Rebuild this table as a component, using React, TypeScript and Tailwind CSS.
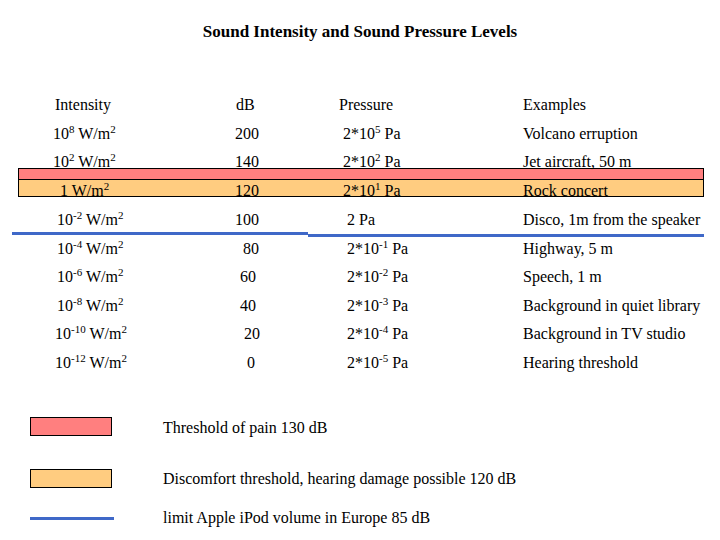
import React from "react";

const Sup = ({ children }: { children: React.ReactNode }) => (
  <span className="relative -top-[6px] text-[11px] leading-none">{children}</span>
);

type RowProps = {
  a: React.ReactNode;
  b: React.ReactNode;
  c: React.ReactNode;
  d: React.ReactNode;
  pa: string;
  pb: string;
  pc: string;
  className?: string;
};

const Row = ({ a, b, c, d, pa, pb, pc, className = "" }: RowProps) => (
  <div className={`flex h-4 leading-4 whitespace-nowrap ${className}`}>
    <div className={`w-[230px] shrink-0 ${pa}`}>{a}</div>
    <div className={`w-[105px] shrink-0 ${pb}`}>{b}</div>
    <div className={`w-[185px] shrink-0 ${pc}`}>{c}</div>
    <div className="pl-[3px]">{d}</div>
  </div>
);

export default function App() {
  return (
    <div
      className="w-[720px] h-[540px] bg-white text-black overflow-hidden relative"
      style={{ fontFamily: '"Liberation Serif", "Times New Roman", serif' }}
    >
      <div className="pt-[22px] h-[42px] text-center text-[17px] font-bold leading-5">
        Sound Intensity and Sound Pressure Levels
      </div>

      <div className="text-[16px]">
        <Row
          className="mt-[55px]"
          pa="pl-[55px]"
          pb="pl-[6px]"
          pc="pl-[4px]"
          a="Intensity"
          b="dB"
          c="Pressure"
          d="Examples"
        />
        <Row
          className="mt-[13px]"
          pa="pl-[53px]"
          pb="pl-[5px]"
          pc="pl-[8px]"
          a={<>10<Sup>8</Sup> W/m<Sup>2</Sup></>}
          b="200"
          c={<>2*10<Sup>5</Sup> Pa</>}
          d="Volcano erruption"
        />
        <Row
          className="mt-[12px]"
          pa="pl-[53px]"
          pb="pl-[5px]"
          pc="pl-[8px]"
          a={<>10<Sup>2</Sup> W/m<Sup>2</Sup></>}
          b="140"
          c={<>2*10<Sup>2</Sup> Pa</>}
          d="Jet aircraft, 50 m"
        />
        <div className="-mt-[2px] ml-[18px] w-[686px] border border-black">
          <div className="h-[11px] bg-[#ff7f7f] border-b border-black" />
          <div className="h-4 pt-[3px] bg-[#ffcc80]">
            <Row
              className="-ml-[19px]"
              pa="pl-[60px]"
              pb="pl-[5px]"
              pc="pl-[8px]"
              a={<>1 W/m<Sup>2</Sup></>}
              b="120"
              c={<>2*10<Sup>1</Sup> Pa</>}
              d="Rock concert"
            />
          </div>
        </div>
        <Row
          className="mt-[15px]"
          pa="pl-[57px]"
          pb="pl-[5px]"
          pc="pl-[12px]"
          a={<>10<Sup>-2</Sup> W/m<Sup>2</Sup></>}
          b="100"
          c="2 Pa"
          d="Disco, 1m from the speaker"
        />
        <div className="flex mt-[4px] h-[5px]">
          <div className="ml-[12px] w-[296px] h-[3px] bg-[#3f68c8]" />
          <div className="mt-[2px] w-[396px] h-[3px] bg-[#3f68c8]" />
        </div>
        <Row
          className="mt-[4px]"
          pa="pl-[57px]"
          pb="pl-[13px]"
          pc="pl-[12px]"
          a={<>10<Sup>-4</Sup> W/m<Sup>2</Sup></>}
          b="80"
          c={<>2*10<Sup>-1</Sup> Pa</>}
          d="Highway, 5 m"
        />
        <Row
          className="mt-[12px]"
          pa="pl-[57px]"
          pb="pl-[10px]"
          pc="pl-[12px]"
          a={<>10<Sup>-6</Sup> W/m<Sup>2</Sup></>}
          b="60"
          c={<>2*10<Sup>-2</Sup> Pa</>}
          d="Speech, 1 m"
        />
        <Row
          className="mt-[13px]"
          pa="pl-[57px]"
          pb="pl-[10px]"
          pc="pl-[12px]"
          a={<>10<Sup>-8</Sup> W/m<Sup>2</Sup></>}
          b="40"
          c={<>2*10<Sup>-3</Sup> Pa</>}
          d="Background in quiet library"
        />
        <Row
          className="mt-[12px]"
          pa="pl-[55px]"
          pb="pl-[14px]"
          pc="pl-[12px]"
          a={<>10<Sup>-10</Sup> W/m<Sup>2</Sup></>}
          b="20"
          c={<>2*10<Sup>-4</Sup> Pa</>}
          d="Background in TV studio"
        />
        <Row
          className="mt-[13px]"
          pa="pl-[55px]"
          pb="pl-[17px]"
          pc="pl-[12px]"
          a={<>10<Sup>-12</Sup> W/m<Sup>2</Sup></>}
          b="0"
          c={<>2*10<Sup>-5</Sup> Pa</>}
          d="Hearing threshold"
        />
      </div>

      <div className="text-[16px] leading-[18px] whitespace-nowrap">
        <div className="flex items-center mt-[46px] h-[19px]">
          <div className="ml-[30px] w-[82px] h-[19px] bg-[#ff7f7f] border border-black" />
          <div className="ml-[51px] mt-[3px]">Threshold of pain 130 dB</div>
        </div>
        <div className="flex items-center mt-[33px] h-[19px]">
          <div className="ml-[30px] w-[82px] h-[19px] bg-[#ffcc80] border border-black" />
          <div className="ml-[51px] mt-[1px]">Discomfort threshold, hearing damage possible 120 dB</div>
        </div>
        <div className="flex items-center mt-[21px] h-[18px]">
          <div className="ml-[30px] w-[84px] h-[3px] bg-[#3f68c8]" />
          <div className="ml-[49px]">limit Apple iPod volume in Europe 85 dB</div>
        </div>
      </div>
    </div>
  );
}
